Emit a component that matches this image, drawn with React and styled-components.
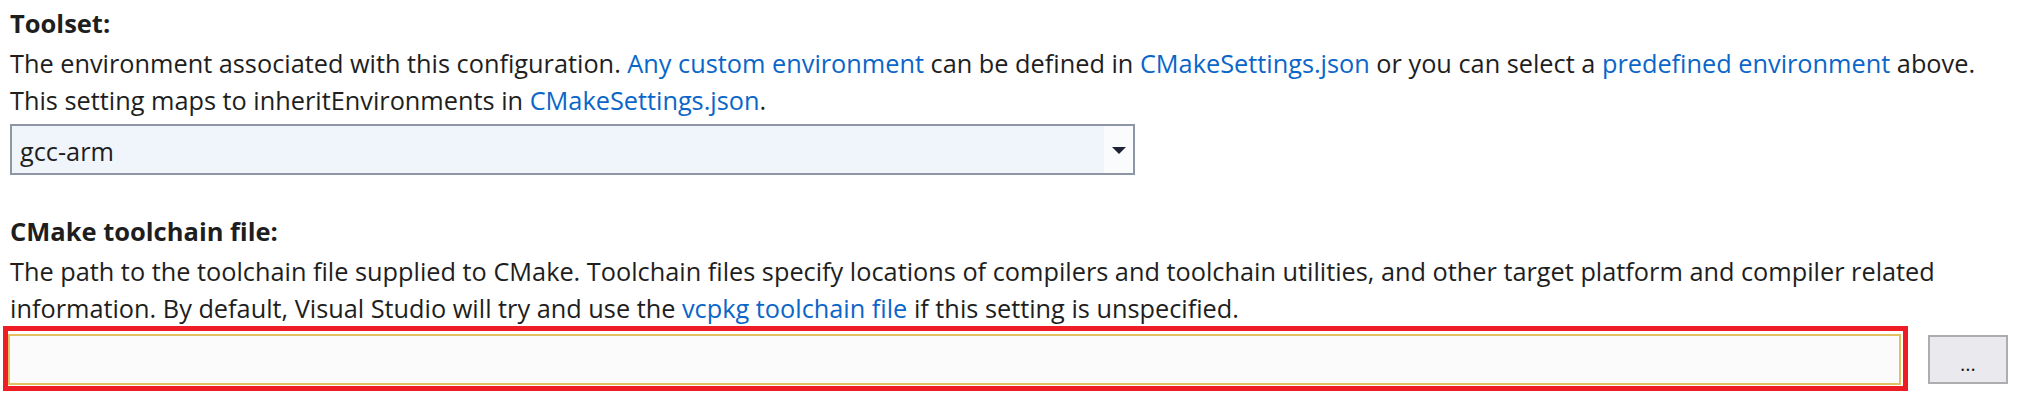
import React from "react";
import styled, { createGlobalStyle } from "styled-components";

const GlobalStyle = createGlobalStyle`
  body {
    margin: 0;
    background: #ffffff;
    font-family: "Open Sans", "Noto Sans", sans-serif;
    color: #1e1e1e;
  }
`;

const App = () => {
  return (
    <Page>
      <GlobalStyle />
      <Heading>Toolset:</Heading>
      <Description>
        The environment associated with this configuration.{" "}
        <Link>Any custom environment</Link> can be defined in{" "}
        <Link>CMakeSettings.json</Link> or you can select a{" "}
        <Link>predefined environment</Link> above.
        <br />
        This setting maps to inheritEnvironments in{" "}
        <Link>CMakeSettings.json</Link>.
      </Description>
      <Select>
        <SelectValue>gcc-arm</SelectValue>
        <SelectArrow>
          <svg width="14" height="7" viewBox="0 0 14 7">
            <path d="M0 0 H14 L7 7 Z" fill="#1c2333" />
          </svg>
        </SelectArrow>
      </Select>

      <Heading $gap={39}>CMake toolchain file:</Heading>
      <Description>
        The path to the toolchain file supplied to CMake. Toolchain files specify
        locations of compilers and toolchain utilities, and other target platform
        and compiler related
        <br />
        information. By default, Visual Studio will try and use the{" "}
        <Link>vcpkg toolchain file</Link> if this setting is unspecified.
      </Description>
      <InputRow>
        <Highlight>
          <PathInput />
        </Highlight>
        <BrowseButton>...</BrowseButton>
      </InputRow>
    </Page>
  );
};

export default App;

const Page = styled.div`
  padding: 6px 10px 0 10px;
  width: 2025px;
  box-sizing: border-box;
`;

const Heading = styled.div`
  font-size: 25.5px;
  font-weight: 700;
  line-height: 34px;
  margin-top: ${(p) => p.$gap || 0}px;
  white-space: nowrap;
`;

const Description = styled.div`
  font-size: 25.3px;
  line-height: 37px;
  margin-top: 5px;
  white-space: nowrap;
`;

const Link = styled.span`
  color: #0a66c8;
`;

const Select = styled.div`
  margin-top: 5px;
  width: 1125px;
  height: 51px;
  box-sizing: border-box;
  border: 2px solid #8e96a6;
  background: #f0f4fb;
  display: flex;
  align-items: stretch;
`;

const SelectValue = styled.div`
  flex: 1;
  display: flex;
  align-items: center;
  padding: 2px 0 0 8px;
  font-size: 25.3px;
  color: #1e1e1e;
`;

const SelectArrow = styled.div`
  width: 29px;
  background: #fafbfd;
  display: flex;
  align-items: center;
  justify-content: center;
  padding-top: 2px;
`;

const InputRow = styled.div`
  display: flex;
  align-items: center;
  gap: 20px;
  margin-top: -1px;
  margin-left: -7px;
`;

const Highlight = styled.div`
  width: 1905px;
  box-sizing: border-box;
  border: 5px solid #ee1c25;
  padding: 3px 2px 1px 0;
`;

const PathInput = styled.div`
  height: 51px;
  box-sizing: border-box;
  border: 2px solid #e3c062;
  background: #fbfbfb;
`;

const BrowseButton = styled.div`
  width: 80px;
  height: 49px;
  box-sizing: border-box;
  border: 2px solid #adadad;
  background: #e9e9ee;
  display: flex;
  align-items: flex-end;
  justify-content: center;
  padding-bottom: 8px;
  font-size: 20px;
  line-height: 1;
  color: #1e1e1e;
  margin-top: 2px;
`;
